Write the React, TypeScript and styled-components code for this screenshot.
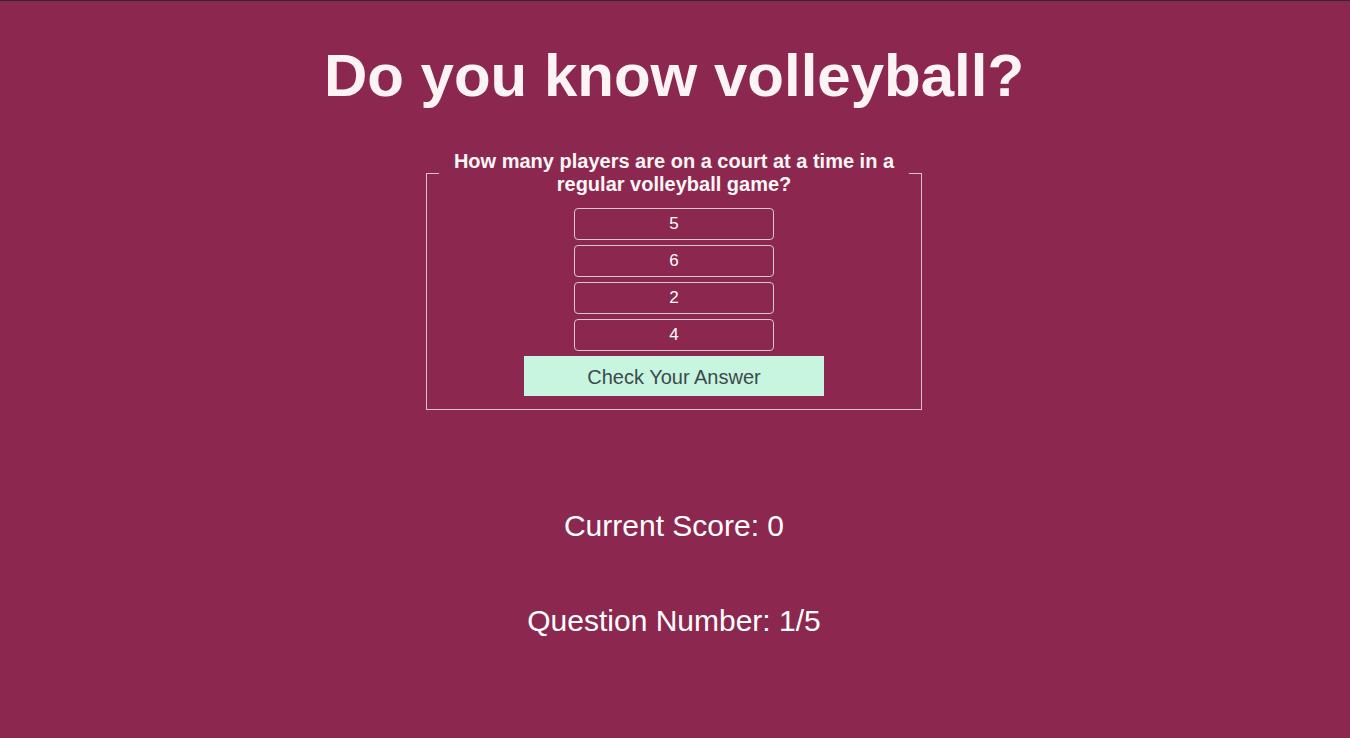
import React from "react";
import styled, { createGlobalStyle } from "styled-components";

const GlobalStyle = createGlobalStyle`
  html, body {
    margin: 0;
    padding: 0;
  }
  body {
    background: #8c284f;
    border-top: 1px solid #2e2a2c;
    font-family: "Liberation Sans", Helvetica, Arial, sans-serif;
    color: #fdf6f6;
    min-height: 100vh;
    box-sizing: border-box;
  }
`;

const Page = styled.main`
  display: flex;
  flex-direction: column;
  align-items: center;
  padding-right: 2px;
`;

const Title = styled.h1`
  margin: 40px 0 0;
  font-size: 60px;
  font-weight: 700;
  line-height: 69px;
  color: #fcf4f4;
`;

const QuestionBox = styled.fieldset`
  margin: 40px 0 0;
  width: 470px;
  padding: 12px 12px 13px;
  border: 1px solid #d9c2cb;
  display: flex;
  flex-direction: column;
  align-items: center;
  gap: 5px;
`;

const Prompt = styled.legend`
  width: 100%;
  padding: 0;
  text-align: center;
  font-size: 20px;
  line-height: 23px;
  font-weight: 700;
  color: #fdf6f6;
`;

const Option = styled.button`
  width: 200px;
  height: 32px;
  border: 1px solid #d6c9ce;
  border-radius: 4px;
  background: transparent;
  color: #ffffff;
  font-family: inherit;
  font-size: 17px;
  padding: 0;
  cursor: pointer;
`;

const CheckButton = styled.button`
  width: 300px;
  height: 40px;
  border: none;
  background: #c8f5df;
  color: #3b4a4c;
  font-family: inherit;
  font-size: 20px;
  padding: 2px 0 0;
  cursor: pointer;
`;

const Stat = styled.p<{ $top: number }>`
  margin: ${(p) => p.$top}px 0 0;
  font-size: 30px;
  line-height: 34px;
  color: #ffffff;
`;

const options = ["5", "6", "2", "4"];

export default function App() {
  return (
    <>
      <GlobalStyle />
      <Page>
        <Title>Do you know volleyball?</Title>
        <QuestionBox>
          <Prompt>How many players are on a court at a time in a regular volleyball game?</Prompt>
          {options.map((o) => (
            <Option key={o}>{o}</Option>
          ))}
          <CheckButton>Check Your Answer</CheckButton>
        </QuestionBox>
        <Stat $top={99}>Current Score: 0</Stat>
        <Stat $top={61}>Question Number: 1/5</Stat>
      </Page>
    </>
  );
}
